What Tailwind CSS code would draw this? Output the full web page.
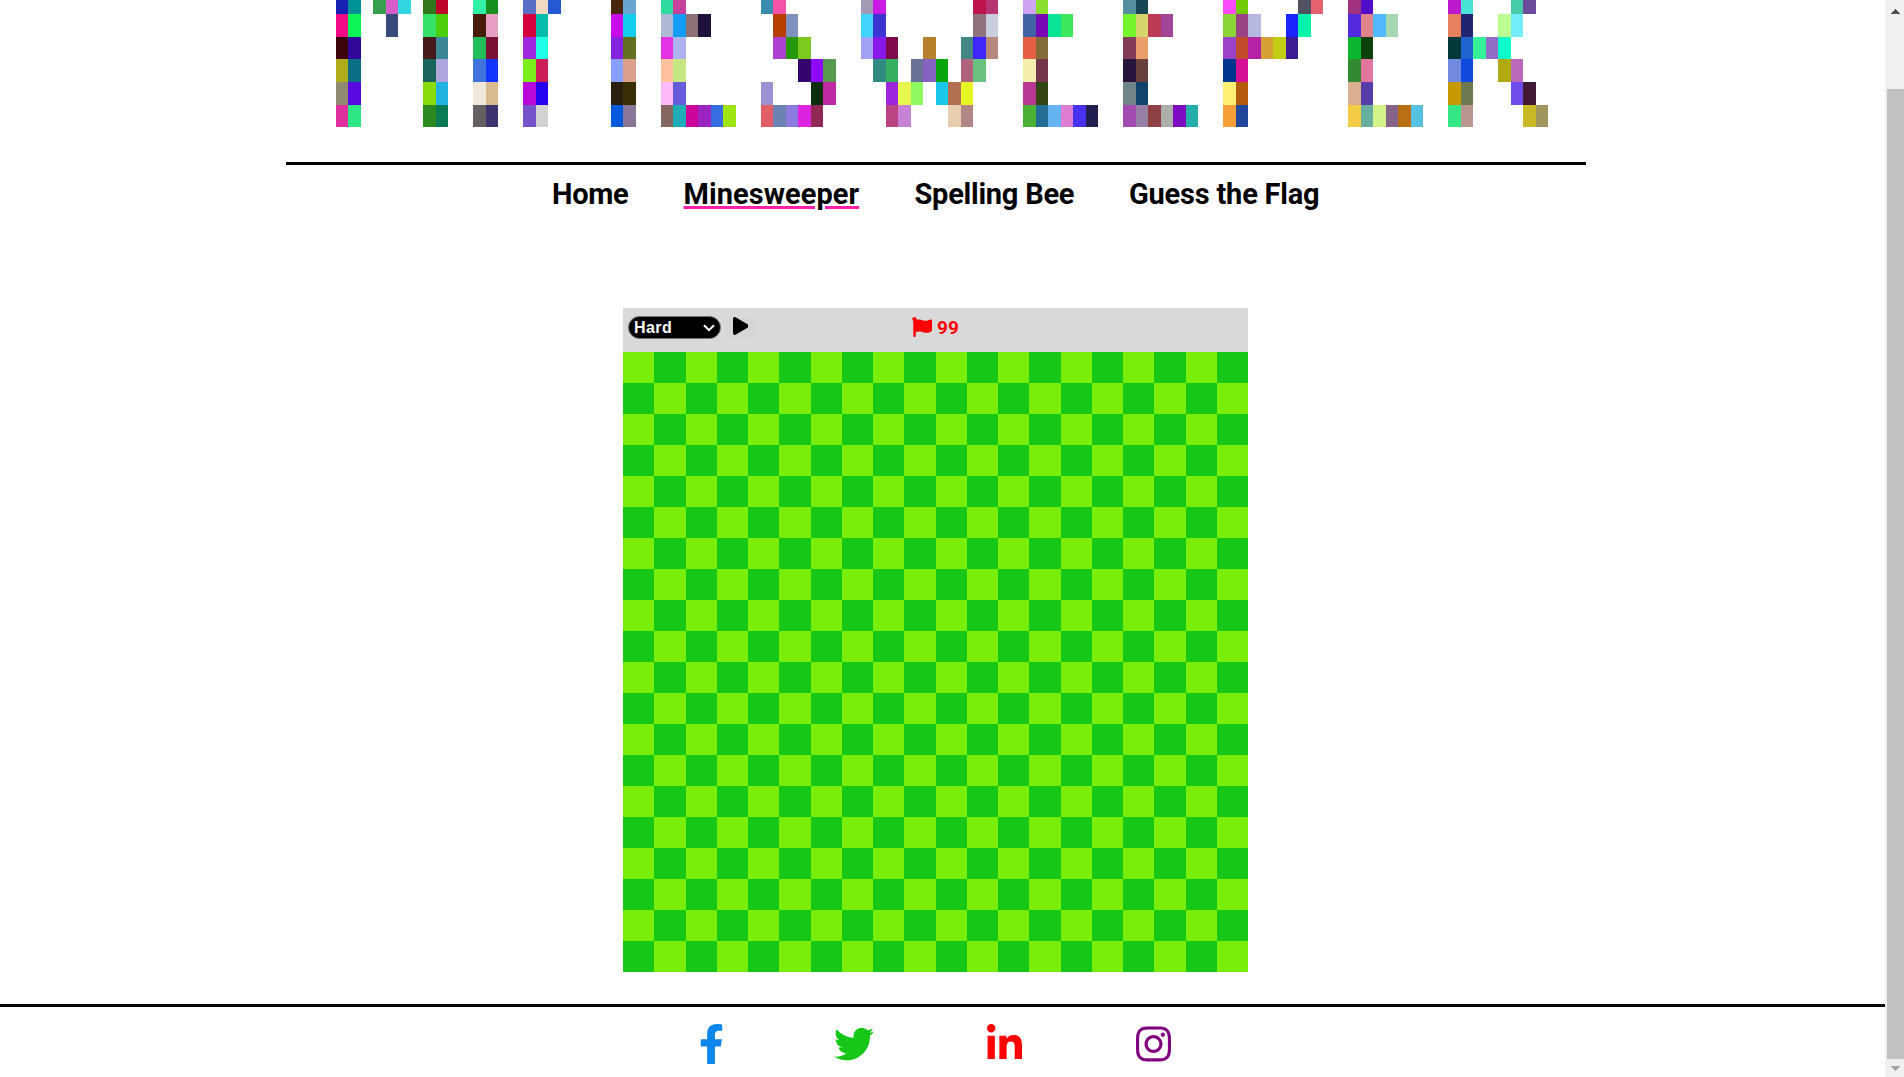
<!DOCTYPE html>
<html lang="en">
<head>
<meta charset="utf-8">
<title>Minesweeper</title>
<script src="https://cdn.jsdelivr.net/npm/@tailwindcss/browser@4"></script>
</head>
<body class="flex h-[1077px] w-[1904px] overflow-hidden bg-white font-['Roboto',sans-serif]">
<div class="flex w-[1885px] shrink-0 flex-col">
  <header class="ml-[285.5px] flex h-[165px] w-[1300.5px] flex-col justify-between border-b-3 border-black">
    <div id="logo" aria-label="Minesweeper" class="grid w-[1300px] grid-cols-[repeat(104,12.5px)] grid-rows-[14px_23px_22px_23px_23px_22px]"></div>
  </header>

  <nav class="ml-[552px] flex h-[143px] pt-[11px] text-[29px] leading-[37px] font-bold whitespace-nowrap text-black">
    <a class="w-[131.5px] tracking-[-0.3px]">Home</a>
    <a class="w-[231px] tracking-[0.05px]"><span class="underline decoration-[#ff1fa8] decoration-3 underline-offset-[2px]">Minesweeper</span></a>
    <a class="w-[214.5px] tracking-[-0.25px]">Spelling Bee</a>
    <a class="tracking-[-0.2px]">Guess the Flag</a>
  </nav>

  <main class="ml-[623px] w-[625px]">
    <div class="flex h-11 items-start bg-[#d9d9d9] pt-2 pl-[5px]">
      <div class="flex h-[23px] w-[93px] items-center justify-between rounded-full border border-[#767676] bg-black pr-[5px] pl-[5px] font-['Liberation_Sans',sans-serif] text-base leading-5 font-bold tracking-[0.4px] text-white">
        <span>Hard</span>
        <svg class="h-2 w-3" viewBox="0 0 12 8" fill="none" stroke="white" stroke-width="2"><path d="M1 1.2 6 6.2 11 1.2"/></svg>
      </div>
      <button class="mt-px ml-[5px] flex h-[22px] w-[29px] items-start justify-center bg-[#d6d6d6]">
        <svg class="h-[18px] w-[15.75px]" viewBox="0 0 448 512"><path d="M424.400 214.700L72.400 6.600C43.800-10.300 0 6.100 0 47.900V464c0 37.500 40.700 60.100 72.400 41.300l352-208c31.400-18.500 31.500-64.100 0-82.600z"/></svg>
      </button>
      <div class="ml-[157px] flex items-start gap-[5px] text-[#ff0000]">
        <svg class="mt-px h-5 w-5" viewBox="0 0 512 512" fill="currentColor"><path d="M349.565 98.783C295.978 98.783 251.721 64 184.348 64c-24.955 0-47.309 4.384-68.045 12.013a55.947 55.947 0 0 0 3.586-23.562C118.117 24.015 94.806 1.206 66.338.048 34.345-1.254 8 24.296 8 56c0 19.026 9.497 35.825 24 45.945V488c0 13.255 10.745 24 24 24h16c13.255 0 24-10.745 24-24v-94.4c28.311-12.064 63.582-22.122 114.435-22.122 53.588 0 97.844 34.783 165.217 34.783 48.169 0 86.667-16.294 122.505-40.858C506.840 359.452 512 349.571 512 339.045v-243.100c0-23.393-24.269-38.870-45.485-29.016-34.338 15.948-76.454 31.854-116.950 31.854z"/></svg>
        <span class="pt-px text-[19px] leading-[22px] font-bold">99</span>
      </div>
    </div>
    <div id="board" class="grid grid-cols-[repeat(20,31.25px)] grid-rows-[repeat(20,31px)]"></div>
  </main>

  <footer class="mt-8 flex h-[73px] items-start border-t-3 border-black pt-[17px] pl-[699px]">
    <svg class="mr-[110px] h-10 w-[25px] fill-[#0d86e9]" viewBox="0 0 320 512"><path d="M279.140 288l14.220-92.660h-88.910v-60.130c0-25.350 12.420-50.060 52.240-50.060h40.420V6.260S260.430 0 225.360 0c-73.220 0-121.080 44.380-121.080 124.720v70.620H22.890V288h81.390v224h100.170V288z"/></svg>
    <svg class="mr-[113px] h-10 w-10 fill-[#17c717]" viewBox="0 0 512 512"><path d="M459.370 151.716c.325 4.548.325 9.097.325 13.645 0 138.720-105.583 298.558-298.558 298.558-59.452 0-114.680-17.219-161.137-47.106 8.447.974 16.568 1.299 25.340 1.299 49.055 0 94.213-16.568 130.274-44.832-46.132-.975-84.792-31.188-98.112-72.772 6.498.974 12.995 1.624 19.818 1.624 9.421 0 18.843-1.300 27.614-3.573-48.081-9.747-84.143-51.980-84.143-102.985v-1.299c13.969 7.797 30.214 12.670 47.431 13.319-28.264-18.843-46.781-51.005-46.781-87.391 0-19.492 5.197-37.360 14.294-52.954 51.655 63.675 129.300 105.258 216.365 109.807-1.624-7.797-2.599-15.918-2.599-24.040 0-57.828 46.782-104.934 104.934-104.934 30.213 0 57.502 12.670 76.670 33.137 23.715-4.548 46.456-13.320 66.599-25.340-7.798 24.366-24.366 44.833-46.132 57.827 21.117-2.273 41.584-8.122 60.426-16.243-14.292 20.791-32.161 39.308-52.628 54.253z"/></svg>
    <svg class="mr-[113.500px] h-10 w-[35px] fill-[#ff0000]" viewBox="0 0 448 512"><path d="M100.280 448H7.400V148.900h92.880zM53.790 108.100C24.090 108.100 0 83.500 0 53.800a53.790 53.790 0 0 1 107.580 0c0 29.700-24.100 54.300-53.790 54.300zM447.900 448h-92.680V302.400c0-34.700-.7-79.200-48.290-79.200-48.290 0-55.690 37.700-55.690 76.700V448h-92.780V148.900h89.080v40.800h1.300c12.400-23.500 42.690-48.300 87.880-48.300 94 0 111.280 61.900 111.280 142.300V448z"/></svg>
    <svg class="h-10 w-[35px] fill-[#800080]" viewBox="0 0 448 512"><path d="M224.100 141c-63.600 0-114.900 51.300-114.900 114.900s51.300 114.900 114.900 114.900S339 319.500 339 255.900 287.700 141 224.100 141zm0 189.600c-41.100 0-74.700-33.500-74.700-74.700s33.500-74.700 74.700-74.700 74.700 33.500 74.700 74.700-33.600 74.700-74.700 74.700zm146.400-194.300c0 14.900-12 26.800-26.800 26.800-14.900 0-26.800-12-26.800-26.800s12-26.800 26.800-26.800 26.800 12 26.800 26.800zm76.100 27.200c-1.700-35.900-9.900-67.700-36.200-93.900-26.200-26.200-58-34.400-93.900-36.200-37-2.100-147.900-2.100-184.900 0-35.800 1.700-67.600 9.900-93.900 36.100s-34.400 58-36.200 93.900c-2.100 37-2.100 147.900 0 184.900 1.700 35.900 9.900 67.700 36.200 93.900s58 34.400 93.900 36.200c37 2.100 147.900 2.100 184.900 0 35.900-1.700 67.700-9.900 93.900-36.200 26.200-26.200 34.400-58 36.200-93.900 2.100-37 2.100-147.800 0-184.800zM398.800 388c-7.800 19.600-22.900 34.700-42.600 42.600-29.500 11.700-99.500 9-132.100 9s-102.700 2.600-132.100-9c-19.600-7.800-34.700-22.900-42.600-42.600-11.700-29.500-9-99.500-9-132.100s-2.600-102.700 9-132.100c7.800-19.600 22.900-34.700 42.600-42.600 29.500-11.700 99.500-9 132.100-9s102.700-2.600 132.100 9c19.600 7.800 34.700 22.900 42.600 42.600 11.700 29.500 9 99.500 9 132.100s2.700 102.700-9 132.100z"/></svg>
  </footer>
</div>

<aside class="flex w-[19px] flex-col items-end bg-[#f0f0f0]">
  <svg class="mt-[9px] mr-1 h-[5px] w-[9px] shrink-0 fill-[#505050]" viewBox="0 0 9 5" shape-rendering="crispEdges"><path d="M4 0h1v1h1v1h1v1h1v1h1v1H0V4h1V3h1V2h1V1h1z"/></svg>
  <div class="mt-[75px] h-[970px] w-[17px] shrink-0 bg-[#c1c1c1]"></div>
  <svg class="mt-[7px] mr-1 h-[5px] w-[9px] shrink-0 fill-[#a3a3a3]" viewBox="0 0 9 5" shape-rendering="crispEdges"><path d="M0 0h9v1H8v1H7v1H6v1H5v1H4V4H3V3H2V2H1V1H0z"/></svg>
</aside>

<script>
// Runs of coloured pixels for each logo row: "startColumn:color,color,..."
const rows = [
  "0:1522b3,009196 3:389f4e,d75dc8,33d6e0 7:30761a,be0528 11:31f2a4,168f1e 15:596ec4,efd9c0,2558d2 22:4a260a,68a5d0 26:2fd99f,c5419b 34:3a8caf,f253a6 42:a39ab5,cc1be4 51:bf134c,b73573 55:d1a3f3,8ade2c 63:558ea0,194654 71:fb4bfc,70ca05 77:505161,e5616f 81:a0327f,520dc8 89:bb19cb,49e3d8 94:45cba8,6b4a9a",
  "0:f20a87,0cf557 4:384b7b 7:35e168,4bcf0a 11:471c0a,e89fc4 15:d4003e,05bdaa 22:c70be9,12cfef 26:b1b8d5,139cf4,8d7175,1e123d 35:b53f00,7e90bd 42:41d5fb,3c35d1 51:8e737d,cacddd 55:4264a5,7808b5,09e495,3de85e 63:73f42b,d4d66d,bc3a55,a14697 71:8bd535,994285,b5b9df 76:1a25fb,06f3ac 81:532adf,df858a,53b9ff,a7d8b1 89:e6815f,222371 93:b9ff91,73edfb",
  "0:3d050b,2f0899 7:46191b,3b8697 11:22bc58,7a1036 15:a026df,20ffe8 22:8424dc,637024 26:e332e1,aeb3ed 35:ad42d2,26980a,7cca20 42:a2a1f2,8919e8,7e084c 47:b6802c 50:448684,4026fb,b6877c 55:e55f45,826b39 63:823b58,e99d68 71:9b43c8,c24c2a,b522a4,d79f35,c2cd14,3c1c94 81:0ab72e,0d400b 89:03393a,2065ce,35f197,916dc8,0cffcb",
  "0:b0ac1a,0c6f87 7:1a655b,aea6dc 11:4173df,1536ff 15:7aee1b,cc1e56 22:87a0ff,dc9f8c 26:fdc19d,c4e783 37:34056f,8e09f5,589a50 43:308a80,34b05f 46:6a7397,8463c0,08a60c 50:b0637c,69c282 55:f5edae,74344a 63:28153d,67403e 71:00368f,d50f95 81:328932,e1759d 89:738ae1,1149de 93:b1a911,b968bb",
  "0:8f8a70,5709df 7:87da0c,20b3e2 11:f1e8dc,d9bb8d 15:bb08da,2503ef 22:2a1e0c,383004 26:ffbafc,685bde 34:9b92d5 38:0c2e0c,bf29a6 44:9c26dc,e7f74d,8efa60 48:18c7e9,b27050,e5f624 55:b93896,334510 63:718588,10446d 71:fff072,b35b0b 81:dab091,543ca9 89:c79a05,6d7a50 94:6d4ce9,401a34",
  "0:df309e,2de785 7:2c891f,0b7b54 11:655f62,3d3371 15:7354cb,d3d1d1 22:045ada,8a7797 26:856762,20adb8,cc0599,9b23bf,366ee1,a0e512 34:e25d64,6b82b3,8d7ce0,dc23e0,912855 44:bb4283,c781d5 49:e6ceaf,b28586 55:4bb135,236c94,65b4f1,e07dd3,4932ef,202050 63:a24bb0,987fa5,8e3f42,adaea9,7e0bc0,25aea9 71:f5a037,21479a 81:f4cc48,68b09d,d5f18a,86648a,b87012,56c1e1 89:35e684,ba9690 95:cab824,a0955d"
];
const logo = document.getElementById("logo");
rows.forEach((row, r) => row.split(" ").forEach(run => {
  const [start, colors] = run.split(":");
  colors.split(",").forEach((color, i) => {
    const cell = document.createElement("i");
    cell.style.gridArea = `${r + 1} / ${Number(start) + i + 5}`;
    cell.style.backgroundColor = "#" + color;
    logo.append(cell);
  });
}));

const board = document.getElementById("board");
for (let y = 0; y < 20; y++) {
  for (let x = 0; x < 20; x++) {
    const tile = document.createElement("div");
    tile.className = (x + y) % 2 ? "bg-[#16c716]" : "bg-[#78ee0a]";
    board.append(tile);
  }
}
</script>
</body>
</html>
